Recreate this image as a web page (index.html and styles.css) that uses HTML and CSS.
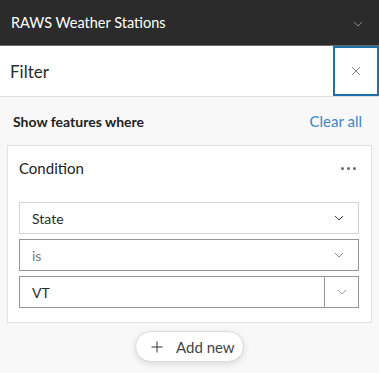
FILE: index.html
```html
<!DOCTYPE html>
<html lang="en">
<head>
  <meta charset="UTF-8">
  <title>RAWS Weather Stations - Filter</title>
  <link rel="stylesheet" href="styles.css">
</head>
<body>
  <div class="app">
    <!-- layer header -->
    <div class="layer-bar">
      <span class="layer-title">RAWS Weather Stations</span>
      <svg class="layer-chevron" width="10" height="6" viewBox="0 0 10 6"><polyline points="1,1 5,5 9,1" fill="none" stroke="#8a8a8a" stroke-width="1"/></svg>
    </div>

    <!-- panel heading -->
    <div class="panel-head">
      <span class="panel-title">Filter</span>
      <button class="close-btn" title="Close">
        <svg width="10" height="10" viewBox="0 0 10 10"><path d="M1 1 L9 9 M9 1 L1 9" stroke="#7a7a7a" stroke-width="0.9" fill="none"/></svg>
      </button>
    </div>

    <div class="filter-body">
      <div class="toolbar">
        <span class="toolbar-title">Show features where</span>
        <a class="clear-link" href="#">Clear all</a>
      </div>

      <div class="card">
        <div class="card-head">
          <span class="card-title">Condition</span>
          <span class="dots"><i></i><i></i><i></i></span>
        </div>

        <div class="select light">
          <span class="select-text">State</span>
          <svg class="chev" width="10" height="6" viewBox="0 0 10 6"><polyline points="1,1 5,5 9,1" fill="none" stroke="#444" stroke-width="1"/></svg>
        </div>
        <div class="select">
          <span class="select-text muted">is</span>
          <svg class="chev" width="10" height="6" viewBox="0 0 10 6"><polyline points="1,1 5,5 9,1" fill="none" stroke="#8a8a8a" stroke-width="1"/></svg>
        </div>
        <div class="select combo">
          <span class="select-text">VT</span>
          <span class="combo-btn">
            <svg width="10" height="6" viewBox="0 0 10 6"><polyline points="1,1 5,5 9,1" fill="none" stroke="#9a9a9a" stroke-width="1"/></svg>
          </span>
        </div>
      </div>

      <div class="add-row">
        <button class="add-btn">
          <svg width="12" height="12" viewBox="0 0 12 12"><path d="M6 0.5 V11.5 M0.5 6 H11.5" stroke="#333" stroke-width="1" fill="none"/></svg>
          <span>Add new</span>
        </button>
      </div>
    </div>
  </div>
</body>
</html>
```

FILE: styles.css
```css
body {
  margin: 0;
  font-family: Lato, "Noto Sans", sans-serif;
  background-color: #f8f8f8;
  color: #323232;
}

.app {
  width: 379px;
  height: 373px;
  overflow: hidden;
}

.layer-bar {
  height: 46px;
  background: #2b2b2b;
  border-bottom: 1px solid #6b6b6b;
  display: flex;
  align-items: center;
  justify-content: space-between;
  padding: 0 16px 0 11px;
  box-sizing: border-box;
}

.layer-title {
  color: #ffffff;
  font-size: 14.5px;
}

.layer-chevron {
  margin-top: 2px;
}

.panel-head {
  height: 51px;
  background: #ffffff;
  border-bottom: 1px solid #dcdcdc;
  display: flex;
  align-items: stretch;
  justify-content: space-between;
  box-sizing: border-box;
}

.panel-title {
  align-self: center;
  padding-left: 10px;
  font-size: 17px;
  color: #2b2b2b;
}

.close-btn {
  width: 46px;
  border: 2px solid #1f6fa8;
  background: #ffffff;
  margin: 0;
  padding: 0;
  display: flex;
  align-items: center;
  justify-content: center;
  cursor: pointer;
}

.toolbar {
  height: 48px;
  display: flex;
  align-items: center;
  justify-content: space-between;
  padding: 0 17px 0 13px;
}

.toolbar-title {
  font-weight: bold;
  font-size: 14px;
  color: #222;
}

.clear-link {
  color: #3a87c2;
  font-size: 15px;
  text-decoration: none;
}

.card {
  margin: 0 7px;
  background: #ffffff;
  border: 1px solid #e0e0e0;
  padding: 0 12px 14px 11px;
}

.card-head {
  height: 44px;
  margin-bottom: 12px;
  display: flex;
  align-items: center;
  justify-content: space-between;
}

.card-title {
  font-size: 15px;
  color: #222;
}

.dots {
  display: flex;
  gap: 3px;
  margin-right: 3px;
}

.dots i {
  width: 3px;
  height: 3px;
  border-radius: 50%;
  background: #6a6a6a;
}

.select {
  height: 32px;
  border: 1px solid #959595;
  box-sizing: border-box;
  display: flex;
  align-items: center;
  justify-content: space-between;
  padding: 0 12px 0 12px;
  margin-bottom: 5px;
}

.select:last-child {
  margin-bottom: 0;
}

.select.light {
  border-color: #d4d4d4;
}

.select-text {
  font-size: 14px;
  color: #2b2b2b;
}

.select-text.muted {
  color: #7a7a7a;
}

.chev {
  margin-right: 2px;
}

.select.combo {
  padding-right: 0;
}

.combo-btn {
  width: 33px;
  align-self: stretch;
  border-left: 1px solid #959595;
  display: flex;
  align-items: center;
  justify-content: center;
}

.add-row {
  display: flex;
  justify-content: center;
  padding-top: 8px;
}

.add-btn {
  height: 31px;
  width: 109px;
  border: 1px solid #dadada;
  border-radius: 16px;
  background: #ffffff;
  box-shadow: 0 2px 6px rgba(0,0,0,0.12);
  display: flex;
  align-items: center;
  gap: 13px;
  padding: 0 0 0 15px;
  font-family: Lato, "Noto Sans", sans-serif;
  font-size: 15px;
  color: #444;
  cursor: pointer;
}
```
